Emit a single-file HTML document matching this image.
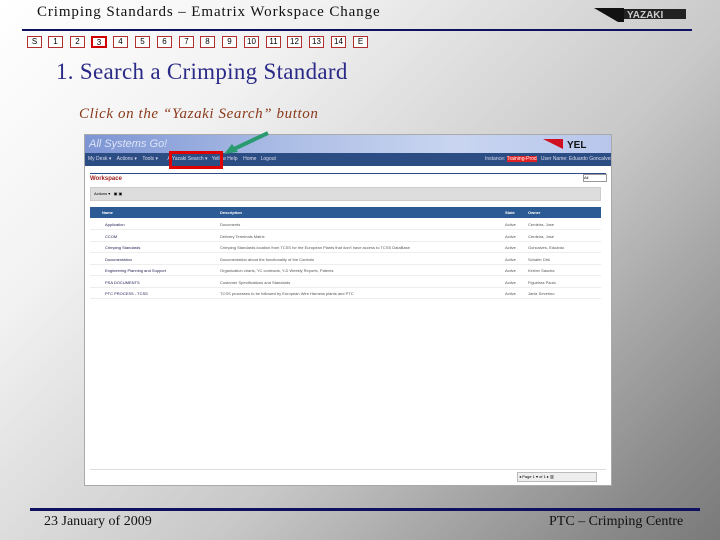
<!DOCTYPE html>
<html><head><style>
*{margin:0;padding:0;box-sizing:border-box}
body{width:720px;height:540px;overflow:hidden;position:relative;font-family:"Liberation Serif",serif;background:linear-gradient(135deg,#ffffff 0%,#f2f2f2 25%,#c8c8c8 60%,#8a8a8a 90%,#7a7a7a 100%)}
.abs{position:absolute}
.nb{position:absolute;top:36px;width:15px;height:12px;border:1px solid #b03030;background:#fff;font-size:8px;text-align:center;line-height:10px;font-family:"Liberation Sans Narrow","Liberation Sans",sans-serif}
.ss{position:absolute;left:84px;top:134px;width:528px;height:352px;background:#fff;border:1px solid #aaa;overflow:hidden;font-family:"Liberation Sans",sans-serif}
.row{position:absolute;left:5px;width:511px;height:11px;font-size:4px;color:#555;line-height:11px;border-bottom:1px solid #eee}
.row span{position:absolute}
</style></head><body>
<div class="abs" style="left:37px;top:4px;font-size:15px;color:#111;letter-spacing:0.9px">Crimping Standards – Ematrix Workspace Change</div>
<svg class="abs" style="left:594px;top:6px" width="94" height="18"><polygon points="0,2 30,2 30,16 24,16" fill="#111"/><rect x="30" y="3" width="62" height="10" fill="#222"/><text x="33" y="12" font-size="10" font-weight="bold" fill="#ccc" font-family="Liberation Sans">YAZAKI</text></svg>
<div class="abs" style="left:22px;top:29px;width:670px;height:2px;background:#101060"></div>
<div class="nb" style="left:27px">S</div><div class="nb" style="left:48px">1</div><div class="nb" style="left:70px">2</div>
<div class="nb" style="left:91px;border:2px solid #d00000;width:16px">3</div>
<div class="nb" style="left:113px">4</div><div class="nb" style="left:135px">5</div><div class="nb" style="left:157px">6</div><div class="nb" style="left:179px">7</div><div class="nb" style="left:200px">8</div><div class="nb" style="left:222px">9</div><div class="nb" style="left:244px">10</div><div class="nb" style="left:266px">11</div><div class="nb" style="left:287px">12</div><div class="nb" style="left:309px">13</div><div class="nb" style="left:331px">14</div><div class="nb" style="left:353px">E</div>
<div class="abs" style="left:56px;top:59px;font-size:23px;color:#2a2a88;letter-spacing:0.3px">1. Search a Crimping Standard</div>
<div class="abs" style="left:79px;top:106px;font-size:15px;font-style:italic;color:#8a3a1a;letter-spacing:0.6px">Click on the “Yazaki Search” button</div>
<div class="ss">
 <div class="abs" style="left:0;top:0;width:528px;height:18px;background:linear-gradient(90deg,#7d95d4,#aebfe6 40%,#c9d5f0 70%,#b7c6ec)"></div>
 <div class="abs" style="left:4px;top:3px;font-size:11px;color:#dde4f7;font-style:italic">All Systems Go!</div>
 <svg class="abs" style="left:458px;top:3px" width="60" height="12"><polygon points="0,1 20,1 20,11" fill="#d01020"/><text x="24" y="10" font-size="10" font-weight="bold" fill="#111" font-family="Liberation Sans">YEL</text></svg>
 <div class="abs" style="left:0;top:18px;width:528px;height:13px;background:#2c4d84"></div>
 <div class="abs" style="left:3px;top:21px;font-size:5px;color:#dde;white-space:nowrap">My Desk ▾ &nbsp;&nbsp; Actions ▾ &nbsp;&nbsp; Tools ▾ &nbsp;&nbsp;&nbsp;&nbsp;&nbsp; A Yazaki Search ▾ &nbsp; Yellow Help &nbsp;&nbsp; Home &nbsp; Logout</div>
 <div class="abs" style="left:400px;top:21px;font-size:5px;color:#dde;white-space:nowrap">Instance: <span style="background:#e02020;color:#fff">Training-Prod</span> &nbsp; User Name: Eduardo Goncalves</div>
 <div class="abs" style="left:5px;top:38px;width:516px;height:1px;background:#2c4d84"></div>
 <div class="abs" style="left:5px;top:41px;font-size:6px;font-weight:bold;color:#a02020">Workspace</div>
 <div class="abs" style="left:498px;top:39px;width:24px;height:8px;border:1px solid #999;font-size:4px">All</div>
 <div class="abs" style="left:5px;top:52px;width:511px;height:14px;background:#ddd;border:1px solid #ccc;font-size:4px;line-height:12px;padding-left:3px">Actions ▾ &nbsp; ▣ ▣</div>
 <div class="abs" style="left:5px;top:72px;width:511px;height:11px;background:#2c5a94;color:#fff;font-size:4px;font-weight:bold;line-height:11px">
  <span class="abs" style="left:12px">Name</span><span class="abs" style="left:130px">Description</span><span class="abs" style="left:415px">State</span><span class="abs" style="left:438px">Owner</span></div>
 <div class="row" style="top:84px"><span style="left:15px;color:#225">Application</span><span style="left:130px">Documents</span><span style="left:415px">Active</span><span style="left:438px">Cerdeira, Jose</span></div>
 <div class="row" style="top:95.5px"><span style="left:15px;color:#225">CCOM</span><span style="left:130px">Delivery Terminals Matrix</span><span style="left:415px">Active</span><span style="left:438px">Cerdeira, Jose</span></div>
 <div class="row" style="top:107px"><span style="left:15px;color:#225">Crimping Standards</span><span style="left:130px">Crimping Standards location from TCSS for the European Plants that don't have access to TCSS DataBase</span><span style="left:415px">Active</span><span style="left:438px">Goncalves, Eduardo</span></div>
 <div class="row" style="top:118.5px"><span style="left:15px;color:#225">Documentation</span><span style="left:130px">Documentation about the functionality of the Controls</span><span style="left:415px">Active</span><span style="left:438px">Schafer Dirk</span></div>
 <div class="row" style="top:130px"><span style="left:15px;color:#225">Engineering Planning and Support</span><span style="left:130px">Organization charts, YC contracts, Y-D Weekly Reports, Patents</span><span style="left:415px">Active</span><span style="left:438px">Kerber Sascha</span></div>
 <div class="row" style="top:141.5px"><span style="left:15px;color:#225">PSA DOCUMENTS</span><span style="left:130px">Customer Specifications and Standards</span><span style="left:415px">Active</span><span style="left:438px">Figueiras Paulo</span></div>
 <div class="row" style="top:153px"><span style="left:15px;color:#225">PTC PROCESS - TCSS</span><span style="left:130px">TCSS processes to be followed by European Wire Harness plants and PTC</span><span style="left:415px">Active</span><span style="left:438px">Jantz Severino</span></div>
 <div class="abs" style="left:5px;top:334px;width:516px;height:1px;background:#ddd"></div>
 <div class="abs" style="left:432px;top:337px;width:80px;height:10px;border:1px solid #bbb;background:#eee;font-size:4px;line-height:8px">&nbsp;◂ Page 1 ▾ of 1 ▸ ▥</div>
</div>
<div class="abs" style="left:169px;top:151px;width:54px;height:18px;border:3px solid #e00000"></div>
<svg class="abs" style="left:222px;top:130px" width="50" height="26"><line x1="46" y1="3" x2="12" y2="19" stroke="#2a9a70" stroke-width="4"/><polygon points="2,24 10,14 16,22" fill="#2a9a70"/></svg>
<div class="abs" style="left:30px;top:508px;width:670px;height:3px;background:#101060"></div>
<div class="abs" style="left:44px;top:514px;font-size:14px;color:#111">23 January of 2009</div>
<div class="abs" style="left:549px;top:514px;font-size:14px;color:#111">PTC – Crimping Centre</div>
</body></html>
